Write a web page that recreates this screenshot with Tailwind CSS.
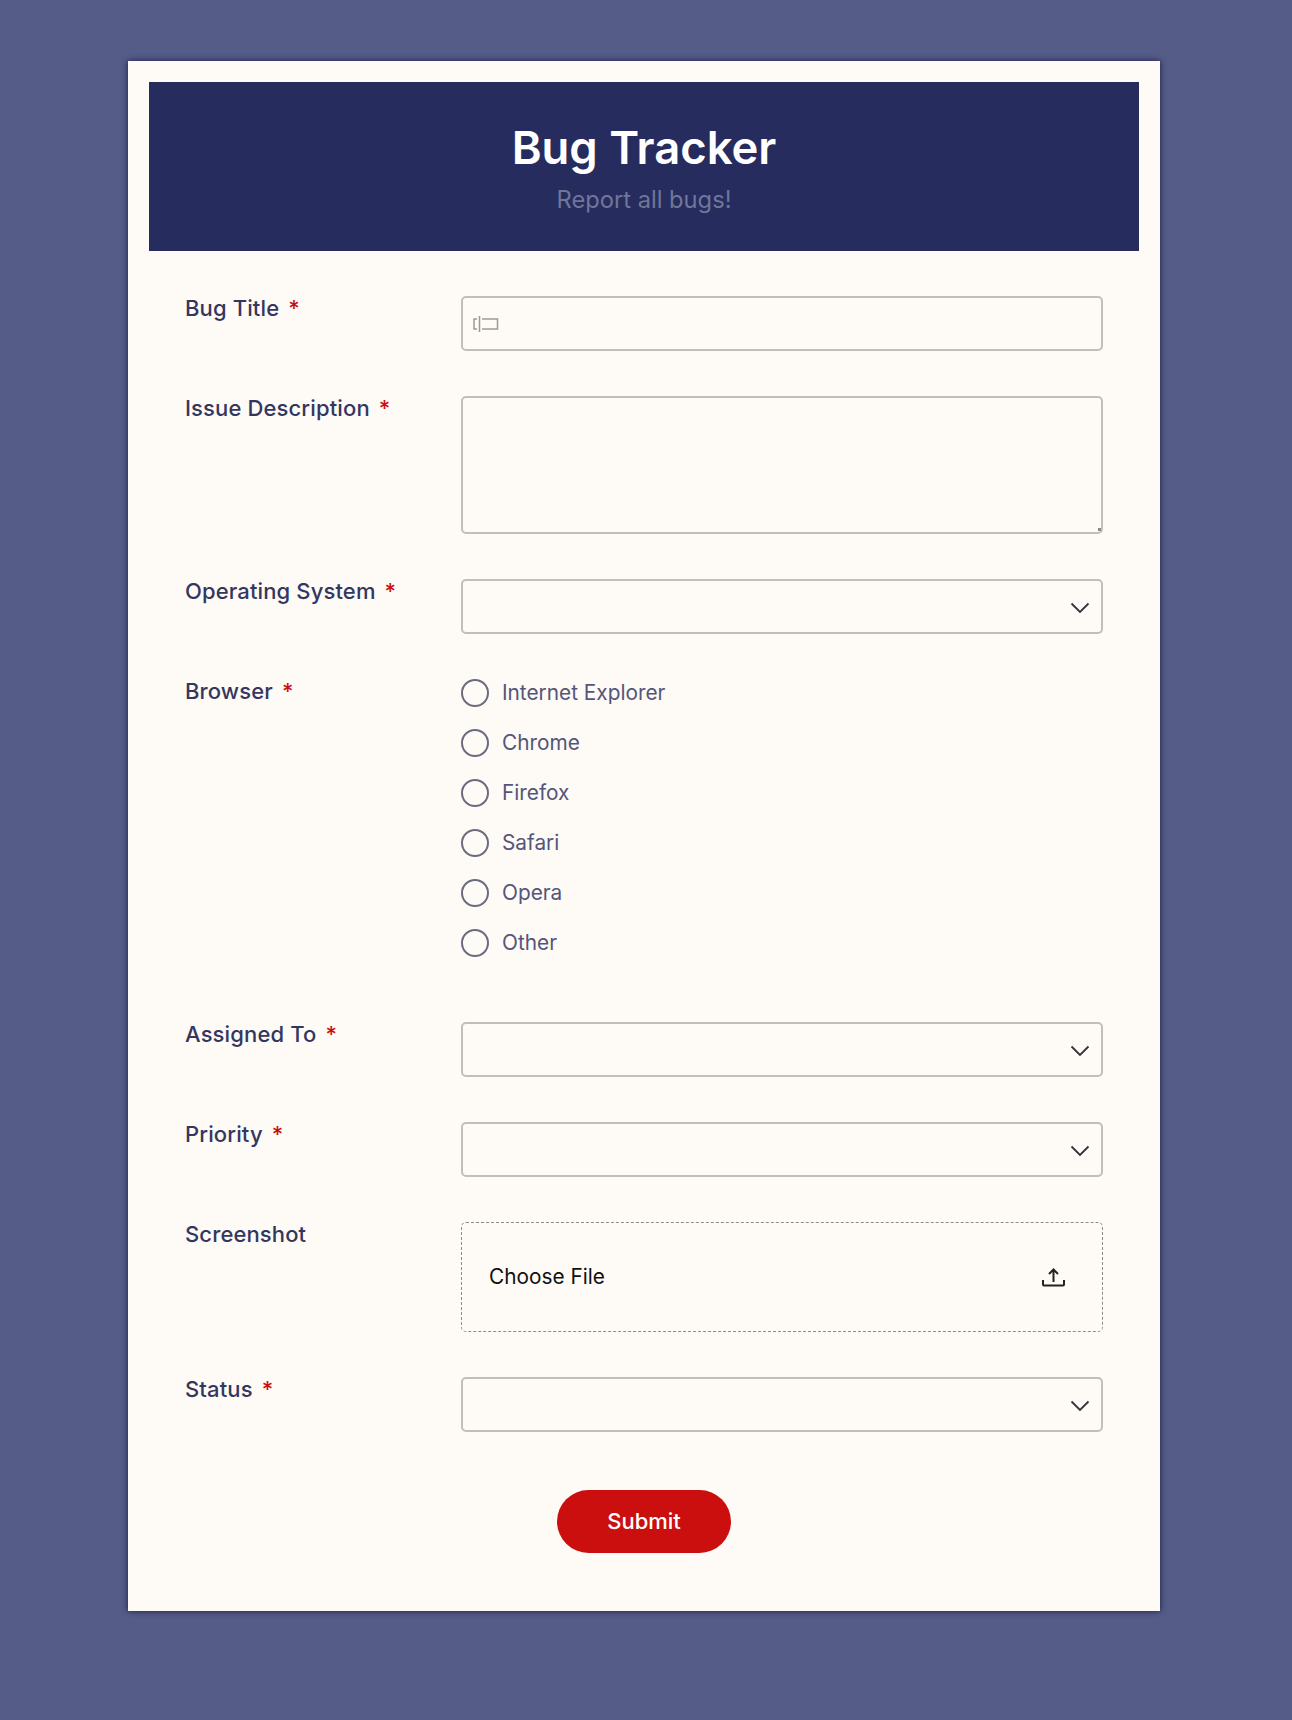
<!DOCTYPE html>
<html lang="en">
<head>
  <meta charset="UTF-8" />
  <title>Bug Tracker</title>
  <script src="https://cdn.jsdelivr.net/npm/@tailwindcss/browser@4"></script>
</head>
<body class="min-h-screen bg-[#545c87] font-['Inter',sans-serif]">
  <div class="pt-[61px] pl-[128px]">
    <div class="w-[1032px] h-[1550px] bg-[#fefaf5] p-[21px] shadow-[0_0_6px_rgba(20,24,60,0.95)]">
      <!-- Header -->
      <div class="h-[169px] bg-[#262c5e] flex flex-col items-center pt-[37px]">
        <h1 class="text-[45.4px] leading-[58px] font-semibold text-white">Bug Tracker</h1>
        <p class="text-[23.7px] leading-[28px] text-[#6f7699] mt-[9px]">Report all bugs!</p>
      </div>

      <div class="pt-[45px] pl-[36px]">
        <!-- Bug title -->
        <div class="flex mb-[45px]">
          <label class="w-[276px] -mt-[1px] text-[22px] leading-[26px] tracking-[0.13px] font-[550] text-[#33375f]">Bug Title <span class="text-[#c8100f] ml-[3px]">*</span></label>
          <div class="w-[642px] h-[55px] border-2 border-[#c2bfba] rounded-[5px] flex items-center pl-[10px]">
            <svg class="w-[26px] h-[16px]" viewBox="0 0 26 16" fill="none" stroke="#9d9a95" stroke-width="1.5"><path d="M4 3H1v10h3M6.500 0v16M9 3h15.500v10H9"/></svg>
          </div>
        </div>

        <!-- Description -->
        <div class="flex mb-[45px]">
          <label class="w-[276px] -mt-[1px] text-[22px] leading-[26px] tracking-[0.13px] font-[550] text-[#33375f]">Issue Description <span class="text-[#c8100f] ml-[3px]">*</span></label>
          <div class="relative">
            <textarea class="w-[642px] h-[138px] border-2 border-[#c2bfba] rounded-[5px] bg-transparent block resize-none"></textarea>
            <span class="absolute right-[2px] bottom-[3px] w-[3px] h-[3px] bg-[#8d8a86]"></span>
          </div>
        </div>

        <!-- Operating system -->
        <div class="flex mb-[45px]">
          <label class="w-[276px] -mt-[1px] text-[22px] leading-[26px] tracking-[0.13px] font-[550] text-[#33375f]">Operating System <span class="text-[#c8100f] ml-[3px]">*</span></label>
          <div class="w-[642px] h-[55px] border-2 border-[#c2bfba] rounded-[5px] flex items-center justify-end pr-[11px]">
            <svg class="w-[20px] h-[12px] mt-[3px]" viewBox="0 0 20 12" fill="none" stroke="#33333d" stroke-width="1.8"><path d="M1.500 1.500 10 10l8.500-8.500"/></svg>
          </div>
        </div>

        <!-- Browser -->
        <div class="flex mb-[43px]">
          <label class="w-[276px] -mt-[1px] text-[22px] leading-[26px] tracking-[0.13px] font-[550] text-[#33375f]">Browser <span class="text-[#c8100f] ml-[3px]">*</span></label>
          <div class="flex flex-col -mt-[11px] mb-[11px]">
            <div class="h-[50px] flex items-center gap-[13px] text-[20.8px] text-[#53567a]"><span class="w-[28px] h-[28px] rounded-full border-2 border-[#6b6b80]"></span>Internet Explorer</div>
            <div class="h-[50px] flex items-center gap-[13px] text-[20.8px] text-[#53567a]"><span class="w-[28px] h-[28px] rounded-full border-2 border-[#6b6b80]"></span>Chrome</div>
            <div class="h-[50px] flex items-center gap-[13px] text-[20.8px] text-[#53567a]"><span class="w-[28px] h-[28px] rounded-full border-2 border-[#6b6b80]"></span>Firefox</div>
            <div class="h-[50px] flex items-center gap-[13px] text-[20.8px] text-[#53567a]"><span class="w-[28px] h-[28px] rounded-full border-2 border-[#6b6b80]"></span>Safari</div>
            <div class="h-[50px] flex items-center gap-[13px] text-[20.8px] text-[#53567a]"><span class="w-[28px] h-[28px] rounded-full border-2 border-[#6b6b80]"></span>Opera</div>
            <div class="h-[50px] flex items-center gap-[13px] text-[20.8px] text-[#53567a]"><span class="w-[28px] h-[28px] rounded-full border-2 border-[#6b6b80]"></span>Other</div>
          </div>
        </div>

        <!-- Assigned to -->
        <div class="flex mb-[45px]">
          <label class="w-[276px] -mt-[1px] text-[22px] leading-[26px] tracking-[0.13px] font-[550] text-[#33375f]">Assigned To <span class="text-[#c8100f] ml-[3px]">*</span></label>
          <div class="w-[642px] h-[55px] border-2 border-[#c2bfba] rounded-[5px] flex items-center justify-end pr-[11px]">
            <svg class="w-[20px] h-[12px] mt-[3px]" viewBox="0 0 20 12" fill="none" stroke="#33333d" stroke-width="1.8"><path d="M1.500 1.500 10 10l8.500-8.500"/></svg>
          </div>
        </div>

        <!-- Priority -->
        <div class="flex mb-[45px]">
          <label class="w-[276px] -mt-[1px] text-[22px] leading-[26px] tracking-[0.13px] font-[550] text-[#33375f]">Priority <span class="text-[#c8100f] ml-[3px]">*</span></label>
          <div class="w-[642px] h-[55px] border-2 border-[#c2bfba] rounded-[5px] flex items-center justify-end pr-[11px]">
            <svg class="w-[20px] h-[12px] mt-[3px]" viewBox="0 0 20 12" fill="none" stroke="#33333d" stroke-width="1.8"><path d="M1.500 1.500 10 10l8.500-8.500"/></svg>
          </div>
        </div>

        <!-- Screenshot -->
        <div class="flex mb-[45px]">
          <label class="w-[276px] -mt-[1px] text-[22px] leading-[26px] tracking-[0.13px] font-[550] text-[#33375f]">Screenshot</label>
          <div class="w-[642px] h-[110px] border-[1.5px] border-dashed border-[#8f8c88] rounded-[5px] flex items-center justify-between pl-[27px] pr-[37px]">
            <span class="text-[20.8px] text-[#111]">Choose File</span>
            <svg class="w-[23px] h-[19px]" viewBox="0 0 23 19" fill="none" stroke="#222" stroke-width="2"><path d="M11.500 14V1.500M7 6l4.500-4.500L16 6M1 12v4.500a1 1 0 0 0 1 1h19a1 1 0 0 0 1-1V12"/></svg>
          </div>
        </div>

        <!-- Status -->
        <div class="flex">
          <label class="w-[276px] -mt-[1px] text-[22px] leading-[26px] tracking-[0.13px] font-[550] text-[#33375f]">Status <span class="text-[#c8100f] ml-[3px]">*</span></label>
          <div class="w-[642px] h-[55px] border-2 border-[#c2bfba] rounded-[5px] flex items-center justify-end pr-[11px]">
            <svg class="w-[20px] h-[12px] mt-[3px]" viewBox="0 0 20 12" fill="none" stroke="#33333d" stroke-width="1.8"><path d="M1.500 1.500 10 10l8.500-8.500"/></svg>
          </div>
        </div>

        <div class="flex justify-center mt-[58px] pr-[36px]">
          <button class="w-[174px] h-[63px] rounded-full bg-[#cb0f0e] text-white text-[22px] font-medium">Submit</button>
        </div>
      </div>
    </div>
  </div>
</body>
</html>
